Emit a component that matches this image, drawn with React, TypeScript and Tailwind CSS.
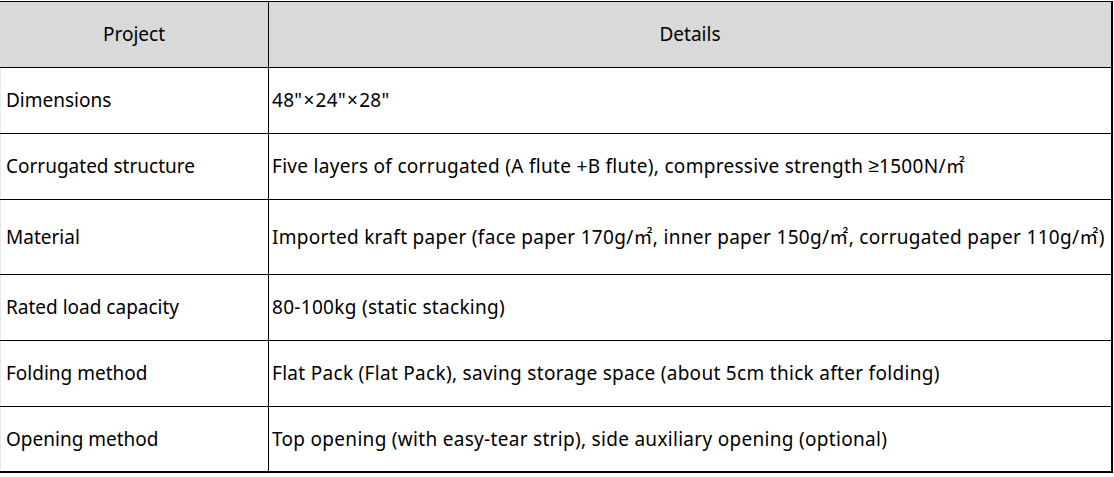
import React from "react";

const GE = () => (
  <span className="ml-[5px]" style={{ fontFamily: '"Liberation Sans", sans-serif' }}>
    ≥
  </span>
);
const X = () => <span className="mx-[1px]">×</span>;

const rows: { label: string; detail: React.ReactNode; h: string }[] = [
  {
    label: "Dimensions",
    detail: (
      <>
        48"<X />24"<X />28"
      </>
    ),
    h: "h-[66px] border-b",
  },
  {
    label: "Corrugated structure",
    detail: (
      <>
        {"Five layers of corrugated (A flute +B flute), compressive strength"}
        <GE />
        {"1500N/㎡"}
      </>
    ),
    h: "h-[66px] border-b",
  },
  {
    label: "Material",
    detail:
      "Imported kraft paper (face paper 170g/㎡, inner paper 150g/㎡, corrugated paper 110g/㎡)",
    h: "h-[75px] border-b",
  },
  { label: "Rated load capacity", detail: "80-100kg (static stacking)", h: "h-[66px] border-b" },
  {
    label: "Folding method",
    detail: "Flat Pack (Flat Pack), saving storage space (about 5cm thick after folding)",
    h: "h-[66px] border-b",
  },
  {
    label: "Opening method",
    detail: "Top opening (with easy-tear strip), side auxiliary opening (optional)",
    h: "h-[64px]",
  },
];

export default function App() {
  return (
    <div
      className="w-[1114px] h-[477px] bg-white pt-px text-black text-[19px]"
      style={{ fontFamily: '"Noto Sans", "Noto Sans CJK SC", sans-serif' }}
    >
      <div className="w-[1113px] border-t border-r-2 border-b-2 border-black">
        <div className="flex h-[66px] border-b border-black bg-[#d9d9d9]">
          <div className="w-[269px] shrink-0 border-r border-black flex items-center justify-center">
            Project
          </div>
          <div className="flex-1 flex items-center justify-center">Details</div>
        </div>
        {rows.map((r) => (
          <div key={r.label} className={`flex border-black ${r.h}`}>
            <div className="w-[269px] shrink-0 border-r border-black border-l border-l-[#e8e8e8] flex items-center pl-[5px]">
              {r.label}
            </div>
            <div className="flex-1 flex items-center pl-[3px] whitespace-nowrap tracking-[0.3px]">
              {r.detail}
            </div>
          </div>
        ))}
      </div>
    </div>
  );
}
